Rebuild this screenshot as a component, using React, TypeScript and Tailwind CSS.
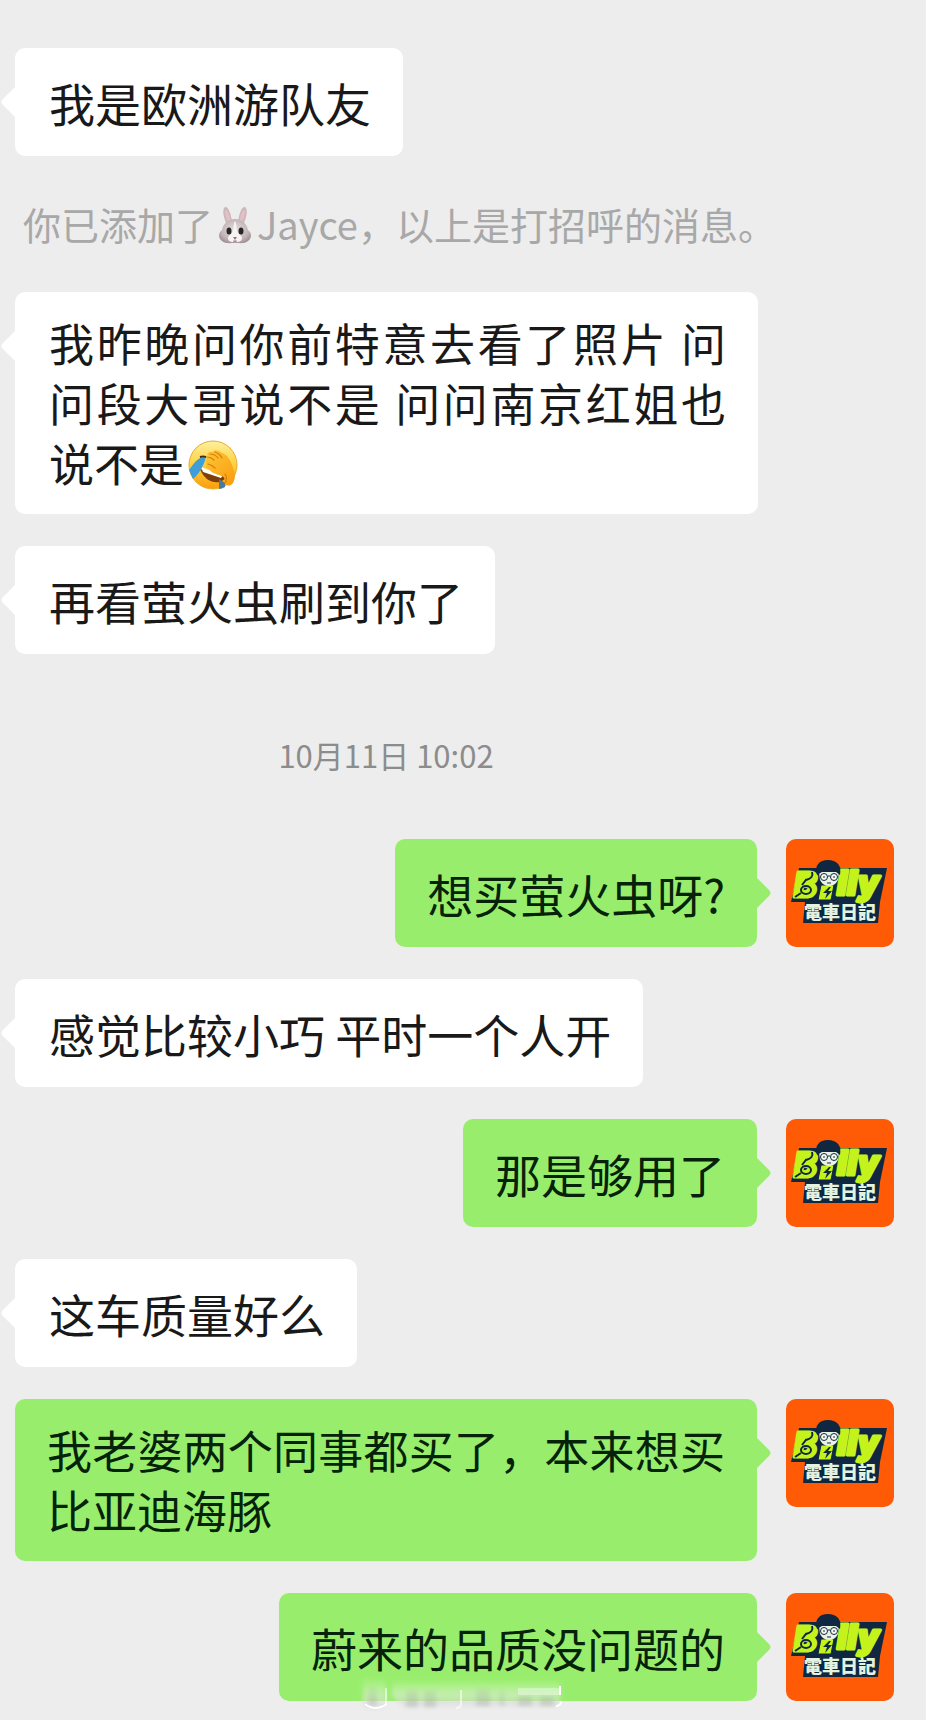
import type { ReactNode } from "react"
import clsx from "clsx"

type Message = {
  id: number
  from: "me" | "friend"
  text: ReactNode
  wide?: boolean
}

function RabbitEmoji() {
  return (
    <svg viewBox="0 0 36 40" role="img" aria-label="兔子" className="mx-1 inline-block h-[40px] w-[36px] align-[-5px]">
      <defs>
        <radialGradient id="fur" cx="50%" cy="45%" r="60%">
          <stop offset="0" stopColor="#e6dedf" />
          <stop offset="0.7" stopColor="#c4b6b8" />
          <stop offset="1" stopColor="#a08e91" />
        </radialGradient>
      </defs>
      <path d="M10 20C6 12 5 4 8 2c3-1 6 6 7 15z" fill="#c9b9bb" />
      <path d="M26 20c4-8 5-16 2-18-3-1-6 6-7 15z" fill="#c9b9bb" />
      <path d="M11 17C8 11 7 6 9 5c2 0 4 6 4 11z" fill="#e5bfc4" />
      <path d="M25 17c3-6 4-11 2-12-2 0-4 6-4 11z" fill="#e5bfc4" />
      <path d="M18 14c7 0 12 5 13 11 4 3 4 8 0 11-3 3-8 2-13 2s-10 1-13-2c-4-3-4-8 0-11 1-6 6-11 13-11z" fill="url(#fur)" />
      <path d="M18 16c2 3 1 9 3 12 2 2 4 3 4 5 0 4-4 4-7 4s-7 0-7-4c0-2 2-3 4-5 2-3 1-9 3-12z" fill="#f7f3f4" />
      <ellipse cx="12" cy="26" rx="2.5" ry="3.5" fill="#29262b" />
      <ellipse cx="24" cy="26" rx="2.5" ry="3.5" fill="#29262b" />
      <path d="M16 32h4l-2 3z" fill="#a06d76" />
      <path d="M18 35v1m-2 0q2 1 4 0" fill="none" stroke="#84686d" strokeWidth="0.8" />
    </svg>
  )
}

function FacepalmEmoji() {
  return (
    <svg viewBox="0 0 50 50" role="img" aria-label="捂脸" className="mx-1 inline-block h-[50px] w-[50px] align-[-8px]">
      <defs>
        <linearGradient id="skin" x1="0" y1="0" x2="0" y2="1">
          <stop offset="0" stopColor="#fdf0a0" />
          <stop offset="0.45" stopColor="#fdd446" />
          <stop offset="1" stopColor="#fb9d09" />
        </linearGradient>
        <linearGradient id="palm" x1="0" y1="0" x2="1" y2="1">
          <stop offset="0" stopColor="#fdcb3c" />
          <stop offset="1" stopColor="#f99b0c" />
        </linearGradient>
      </defs>
      <circle cx="25" cy="25" r="24" fill="url(#skin)" stroke="#e8ab31" strokeWidth="1" />
      <path d="M12 29q14 3 26 8c-4 8-20 8-26-8z" fill="#7c3f0c" />
      <path d="M13 27l22 8-2 3-18-6z" fill="#fff" />
      <path d="M12 18l6-1c-2 9-8 18-13 22l-4-9c4-5 6-9 11-12z" fill="#3d9ed8" />
      <path d="M31 39l6 4v4q-3 2-6 2z" fill="#4a7b9c" />
      <path
        d="M12 17c3-1 5-1 8 0-2-3 0-6 4-5 3-3 7-2 10 1 6 2 9 8 11 15 2 6 3 9 0 15-4 5-8 2-8-3-1-5-5-4-9-6-4-1-7-4-6-5-4-1-5-4-3-5-2-2-2-5 1-5z"
        fill="url(#palm)"
      />
      <path
        d="M19 17q4 0 7 3M22 14q5 0 8 4M27 12q5 2 7 6M20 24q4 1 7 4M37 34q3 4 0 9"
        fill="none"
        stroke="#d97d0b"
        strokeWidth="1.2"
        strokeLinecap="round"
      />
      <path d="M12 17q3-1 6 0" stroke="#4b2a12" strokeWidth="2" fill="none" />
    </svg>
  )
}

function Avatar() {
  return (
    <svg viewBox="0 0 108 108" role="img" aria-label="Billy 電車日記" className="size-[108px] shrink-0 rounded-[10px]">
      <rect width="108" height="108" fill="#ff5a05" />
      <path d="M13 29H33L36 24Q44 19 52 25L54 29H101L94 63L92 84H17L19 63H5Z" fill="#0f2740" />
      <g
        fill="#c4f31c"
        stroke="#c4f31c"
        strokeWidth="3"
        strokeLinejoin="round"
        fontSize="34"
        fontWeight="900"
        fontStyle="italic"
        fontFamily="Inter, sans-serif"
      >
        <text x="8" y="58">B</text>
        <text x="51" y="56">lly</text>
      </g>
      {/* charging cable across the B */}
      <path d="M26 33q2 6-6 8l-4 5" fill="none" stroke="#0f2740" strokeWidth="2" />
      <ellipse cx="20" cy="51" rx="5" ry="4" fill="none" stroke="#0f2740" strokeWidth="2" />
      <path d="M15 54l-6 4" stroke="#0f2740" strokeWidth="2" />
      <path d="M35 46h13l-3 15H32z" fill="#c4f31c" stroke="#0f2740" strokeWidth="1" />
      <path d="M43 48l-6 6h4l-2 6 7-8h-4l3-4z" fill="#0f2740" />
      {/* face */}
      <path d="M33 33h20l-1 8q-3 6-9 6t-9-6z" fill="#e9f2e4" />
      <path d="M31 36c-3-9 2-15 11-15 8 0 14 5 12 15l-4-3H36z" fill="#0f2740" />
      <circle cx="38" cy="38" r="3.5" fill="#f4f8ef" stroke="#0f2740" strokeWidth="1" />
      <circle cx="48" cy="38" r="3.5" fill="#f4f8ef" stroke="#0f2740" strokeWidth="1" />
      <path d="M37 38h2m8 0h2M42 37h2M41 44h4" stroke="#0f2740" strokeWidth="1.2" />
      <text
        x="18"
        y="80"
        fontSize="18"
        fontWeight="900"
        fill="#e3f3df"
        fontFamily="'Noto Sans CJK TC', sans-serif"
      >
        電車日記
      </text>
    </svg>
  )
}

function Bubble({ message }: { message: Message }) {
  const mine = message.from === "me"
  return (
    <div
      className={clsx(
        "relative flex min-h-[108px] items-center rounded-[10px] py-[21px]",
        mine ? "bg-[#98ee6c] px-8 text-[#06230a]" : "bg-white pr-8 pl-[34px] text-[#191919]",
      )}
    >
      <svg
        viewBox="0 0 14 30"
        aria-hidden="true"
        className={clsx(
          "absolute top-[39px] h-[30px] w-[14px]",
          mine ? "left-full fill-[#98ee6c]" : "right-full -scale-x-100 fill-white",
        )}
      >
        <path d="M0 0L12 12Q15 15 12 18L0 30Z" />
      </svg>
      <p className={clsx("leading-[60px]", message.wide ? "text-justify text-[45px]" : "text-[46px]")}>
        {message.text}
      </p>
    </div>
  )
}

function MessageRow({ message }: { message: Message }) {
  if (message.from === "me") {
    return (
      <li className="flex items-start gap-[29px]">
        <div className="flex flex-1 justify-end">
          <Bubble message={message} />
        </div>
        <Avatar />
      </li>
    )
  }
  return (
    <li className="flex pr-[136px]">
      <Bubble message={message} />
    </li>
  )
}

function Watermark() {
  return (
    <svg
      viewBox="0 0 210 40"
      aria-hidden="true"
      className="absolute bottom-1 left-1/2 h-[40px] w-[210px] -translate-x-1/2"
    >
      <defs>
        <linearGradient id="fade" x1="0" y1="0" x2="0" y2="1">
          <stop offset="0" stopColor="#fff" stopOpacity="0" />
          <stop offset="0.6" stopColor="#e4ecdf" stopOpacity="0.6" />
          <stop offset="1" stopColor="#d0d0d0" stopOpacity="0.5" />
        </linearGradient>
        <linearGradient id="shade" x1="0" y1="0" x2="0" y2="1">
          <stop offset="0" stopColor="#a5ada0" stopOpacity="0" />
          <stop offset="1" stopColor="#a5ada0" stopOpacity="0.5" />
        </linearGradient>
        <filter id="soft" x="-10%" y="-20%" width="120%" height="140%">
          <feGaussianBlur stdDeviation="2" />
        </filter>
      </defs>
      <g filter="url(#soft)">
        <path d="M5 2h23v27q-11 8-23 0z" fill="url(#fade)" />
        <path d="M34 4h168v26H46q-8-4-12-10z" fill="url(#fade)" />
        <path d="M10 6h9v23h-9zM48 14h12v17H48zM66 14h12v17H66zM118 12h14v18h-14zM142 14h4v16h-4zM160 20h14v10h-14zM182 20h14v10h-14z" fill="url(#shade)" />
      </g>
      <path d="M7 28q10 8 22 0" fill="none" stroke="#fff" strokeWidth="2" />
      <path d="M28 12v16M103 14v14q0 4-5 4" fill="none" stroke="#fff" strokeOpacity="0.6" strokeWidth="2" />
      <path d="M160 12h42v7h-42z" fill="#fff" fillOpacity="0.35" />
      <path d="M202 10v9M203 25q0 5-5 5" fill="none" stroke="#fff" strokeWidth="2" />
    </svg>
  )
}

const greeting: Message[] = [{ id: 1, from: "friend", text: "我是欧洲游队友" }]

const firstDay: Message[] = [
  {
    id: 2,
    from: "friend",
    wide: true,
    text: (
      <>
        我昨晚问你前特意去看了照片 问问段大哥说不是 问问南京红姐也说不是
        <FacepalmEmoji />
      </>
    ),
  },
  { id: 3, from: "friend", text: "再看萤火虫刷到你了" },
]

const secondDay: Message[] = [
  { id: 4, from: "me", text: "想买萤火虫呀?" },
  { id: 5, from: "friend", text: "感觉比较小巧 平时一个人开" },
  { id: 6, from: "me", text: "那是够用了" },
  { id: 7, from: "friend", text: "这车质量好么" },
  { id: 8, from: "me", wide: true, text: "我老婆两个同事都买了，本来想买比亚迪海豚" },
  { id: 9, from: "me", text: "蔚来的品质没问题的" },
]

function MessageList({ messages }: { messages: Message[] }) {
  return (
    <ul className="flex flex-col gap-8">
      {messages.map((message) => (
        <MessageRow key={message.id} message={message} />
      ))}
    </ul>
  )
}

export default function App() {
  return (
    <main
      lang="zh-CN"
      className="relative flex min-h-screen flex-col gap-8 bg-[#ededed] pt-12 pr-8 pb-[19px] pl-[15px] font-['Noto_Sans_CJK_SC',sans-serif]"
    >
      <MessageList messages={greeting} />

      <p className="pl-2 text-[38px] leading-[72px] whitespace-nowrap text-[#a8a8a8]">
        你已添加了
        <RabbitEmoji />
        Jayce，以上是打招呼的消息。
      </p>

      <MessageList messages={firstDay} />

      <p className="pt-4 pr-[137px] text-center text-[31px] leading-[105px] text-[#8c8c8c]">
        <time>10月11日 10:02</time>
      </p>

      <MessageList messages={secondDay} />

      <Watermark />
    </main>
  )
}
